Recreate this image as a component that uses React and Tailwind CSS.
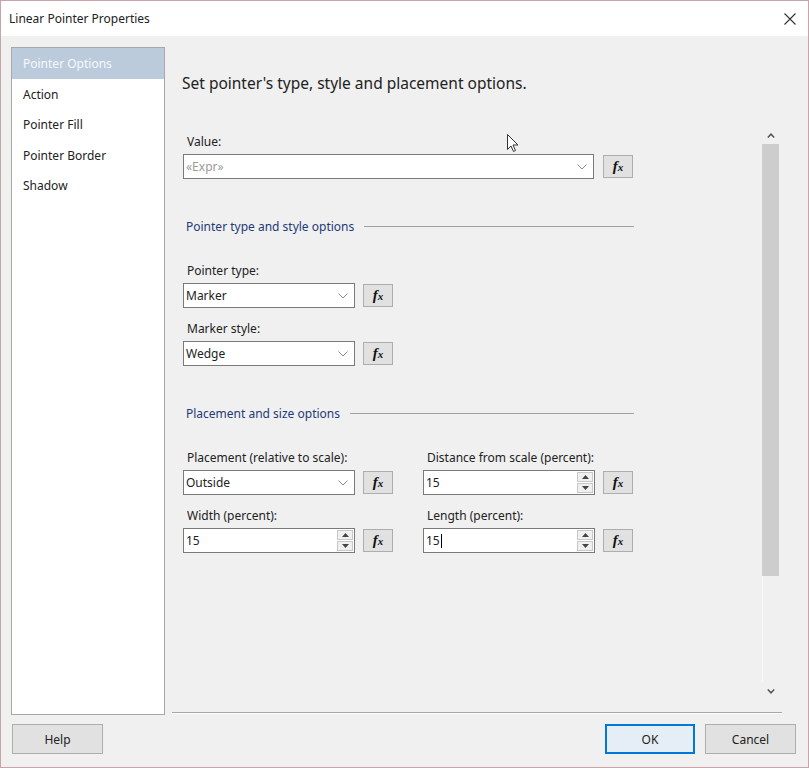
import React from 'react';

const navItems = ['Pointer Options', 'Action', 'Pointer Fill', 'Pointer Border', 'Shadow'];

function FxButton() {
  return (
    <button className="w-[30px] h-[23px] mt-[1px] bg-[#e1e1e1] border border-[#adadad] flex items-center justify-center shrink-0">
      <span className="font-['Liberation_Serif',serif] italic font-bold text-[15px] leading-none text-[#111]">
        f<span className="text-[11px]">x</span>
      </span>
    </button>
  );
}

function Combo({ value, width, placeholder }) {
  return (
    <div className={`${width} h-[25px] bg-white border border-[#7a7a7a] flex items-center justify-between pl-[2px] pr-[6px]`}>
      <span className={placeholder ? 'text-[#9a9a9a] text-[12px]' : 'text-[#222] text-[12px]'}>{value}</span>
      <svg width="10" height="6" viewBox="0 0 10 6" className="shrink-0">
        <polyline points="0.5,0.5 5,5 9.5,0.5" fill="none" stroke="#8a8a8a" strokeWidth="1" />
      </svg>
    </div>
  );
}

function Spinner({ value, caret }) {
  return (
    <div className="w-[172px] h-[25px] bg-white border border-[#7a7a7a] flex items-center justify-between pl-[2px] pr-[1px]">
      <span className="text-[#222] text-[12px] flex items-center">
        {value}
        {caret && <span className="inline-block w-[1px] h-[14px] bg-black ml-[1px]" />}
      </span>
      <div className="flex flex-col h-[21px] w-[16px] gap-[1px]">
        <div className="flex-1 bg-[#f0f0f0] border border-[#c8c8c8] flex items-center justify-center">
          <svg width="7" height="4" viewBox="0 0 7 4"><polygon points="0,4 3.5,0 7,4" fill="#444" /></svg>
        </div>
        <div className="flex-1 bg-[#f0f0f0] border border-[#c8c8c8] flex items-center justify-center">
          <svg width="7" height="4" viewBox="0 0 7 4"><polygon points="0,0 3.5,4 7,0" fill="#444" /></svg>
        </div>
      </div>
    </div>
  );
}

function Label({ children }) {
  return <div className="h-[16px] pt-[1px] leading-[16px] pl-[4px] mb-[5px] text-[12px] text-[#222]">{children}</div>;
}

function Section({ title }) {
  return (
    <div className="flex items-center h-[16px] pl-[3px]">
      <span className="text-[12px] text-[#1e3a78] leading-[16px] pt-[2px]">{title}</span>
      <div className="flex-1 ml-[10px] h-px bg-[#a0a0a0]" />
    </div>
  );
}

function App() {
  return (
    <div className="relative w-[809px] h-[768px] border border-[#c9a3aa] bg-[#f0f0f0] flex flex-col font-['Noto_Sans',sans-serif] text-[#222] overflow-hidden">
      {/* title bar */}
      <div className="h-[35px] bg-white flex items-center justify-between pl-[8px] pr-[12px] shrink-0">
        <span className="text-[12px]">Linear Pointer Properties</span>
        <svg width="12" height="12" viewBox="0 0 12 12">
          <path d="M0.5 0.5 L11.5 11.5 M11.5 0.5 L0.5 11.5" stroke="#333" strokeWidth="1.1" />
        </svg>
      </div>

      {/* body */}
      <div className="flex pl-[10px] pr-[26px] pt-[11px] gap-[7px] h-[679px] shrink-0">
        <div className="w-[154px] h-[668px] bg-white border border-[#a8a8a8] flex flex-col">
          {navItems.map((item, i) => (
            <div
              key={item}
              className={`h-[30.5px] flex items-center pl-[11px] pt-[2px] text-[12px] ${i === 0 ? 'bg-[#bccbdb] text-[#f6f8fb]' : 'text-[#222]'}`}
            >
              {item}
            </div>
          ))}
        </div>

        <div className="flex-1 flex flex-col h-[668px]">
          <div className="h-[78px] pt-[24px] pl-[10px]">
            <span className="text-[15.5px] text-[#222]">Set pointer's type, style and placement options.</span>
          </div>

          <div className="h-[588px] border-b border-[#a8a8a8] shadow-[0_1px_0_#ffffff] flex">
            <div className="flex-1 pl-[11px] pt-[8px]">
              <div className="w-[451px]">
                <Label>Value:</Label>
                <div className="flex gap-[9px]">
                  <Combo value="«Expr»" width="w-[411px]" placeholder />
                  <FxButton />
                </div>

                <div className="mt-[39px]">
                  <Section title="Pointer type and style options" />
                </div>

                <div className="mt-[28px]">
                  <Label>Pointer type:</Label>
                  <div className="flex gap-[8px]">
                    <Combo value="Marker" width="w-[172px]" />
                    <FxButton />
                  </div>
                </div>
                <div className="mt-[12px]">
                  <Label>Marker style:</Label>
                  <div className="flex gap-[8px]">
                    <Combo value="Wedge" width="w-[172px]" />
                    <FxButton />
                  </div>
                </div>

                <div className="mt-[39px]">
                  <Section title="Placement and size options" />
                </div>

                <div className="mt-[28px] grid grid-cols-[240px_1fr]">
                  <div>
                    <Label>Placement (relative to scale):</Label>
                    <div className="flex gap-[8px]">
                      <Combo value="Outside" width="w-[172px]" />
                      <FxButton />
                    </div>
                  </div>
                  <div>
                    <Label>Distance from scale (percent):</Label>
                    <div className="flex gap-[8px]">
                      <Spinner value="15" />
                      <FxButton />
                    </div>
                  </div>
                  <div className="mt-[12px]">
                    <Label>Width (percent):</Label>
                    <div className="flex gap-[8px]">
                      <Spinner value="15" />
                      <FxButton />
                    </div>
                  </div>
                  <div className="mt-[12px]">
                    <Label>Length (percent):</Label>
                    <div className="flex gap-[8px]">
                      <Spinner value="15" caret />
                      <FxButton />
                    </div>
                  </div>
                </div>
              </div>
            </div>

            {/* scrollbar */}
            <div className="w-[17px] mr-[3px] pt-[1px] flex flex-col">
              <div className="h-[18px] flex items-center justify-center">
                <svg width="8" height="5" viewBox="0 0 8 5"><polyline points="0.8,4.5 4,1.2 7.2,4.5" fill="none" stroke="#555" strokeWidth="1.5" /></svg>
              </div>
              <div className="h-[432px] bg-[#cdcdcd]" />
              <div className="h-[106px] border-l border-[#f8f8f8]" />
              <div className="h-[18px] flex items-center justify-center">
                <svg width="8" height="5" viewBox="0 0 8 5"><polyline points="0.8,0.5 4,3.8 7.2,0.5" fill="none" stroke="#555" strokeWidth="1.5" /></svg>
              </div>
            </div>
          </div>
        </div>
      </div>

      {/* footer */}
      <div className="flex justify-between pl-[11px] pr-[12px] pt-[9px]">
        <button className="w-[91px] h-[30px] pt-[2px] bg-[#e1e1e1] border border-[#adadad] text-[12px]">Help</button>
        <div className="flex gap-[10px]">
          <button className="w-[90px] h-[30px] pt-[2px] bg-[#e5eef6] border border-[#0078d7] shadow-[inset_0_0_0_1px_#0078d7] text-[12px]">OK</button>
          <button className="w-[91px] h-[30px] pt-[2px] bg-[#e1e1e1] border border-[#adadad] text-[12px]">Cancel</button>
        </div>
      </div>

      {/* mouse cursor */}
      <svg className="absolute left-[506px] top-[133px]" width="12" height="19" viewBox="0 0 12 19">
        <path d="M0.5 0.5 L0.5 15.5 L4 12 L6.5 17.5 L8.5 16.5 L6 11 L11 11 Z" fill="#fff" stroke="#333" strokeWidth="1" strokeLinejoin="round" />
      </svg>
    </div>
  );
}

export default App;
